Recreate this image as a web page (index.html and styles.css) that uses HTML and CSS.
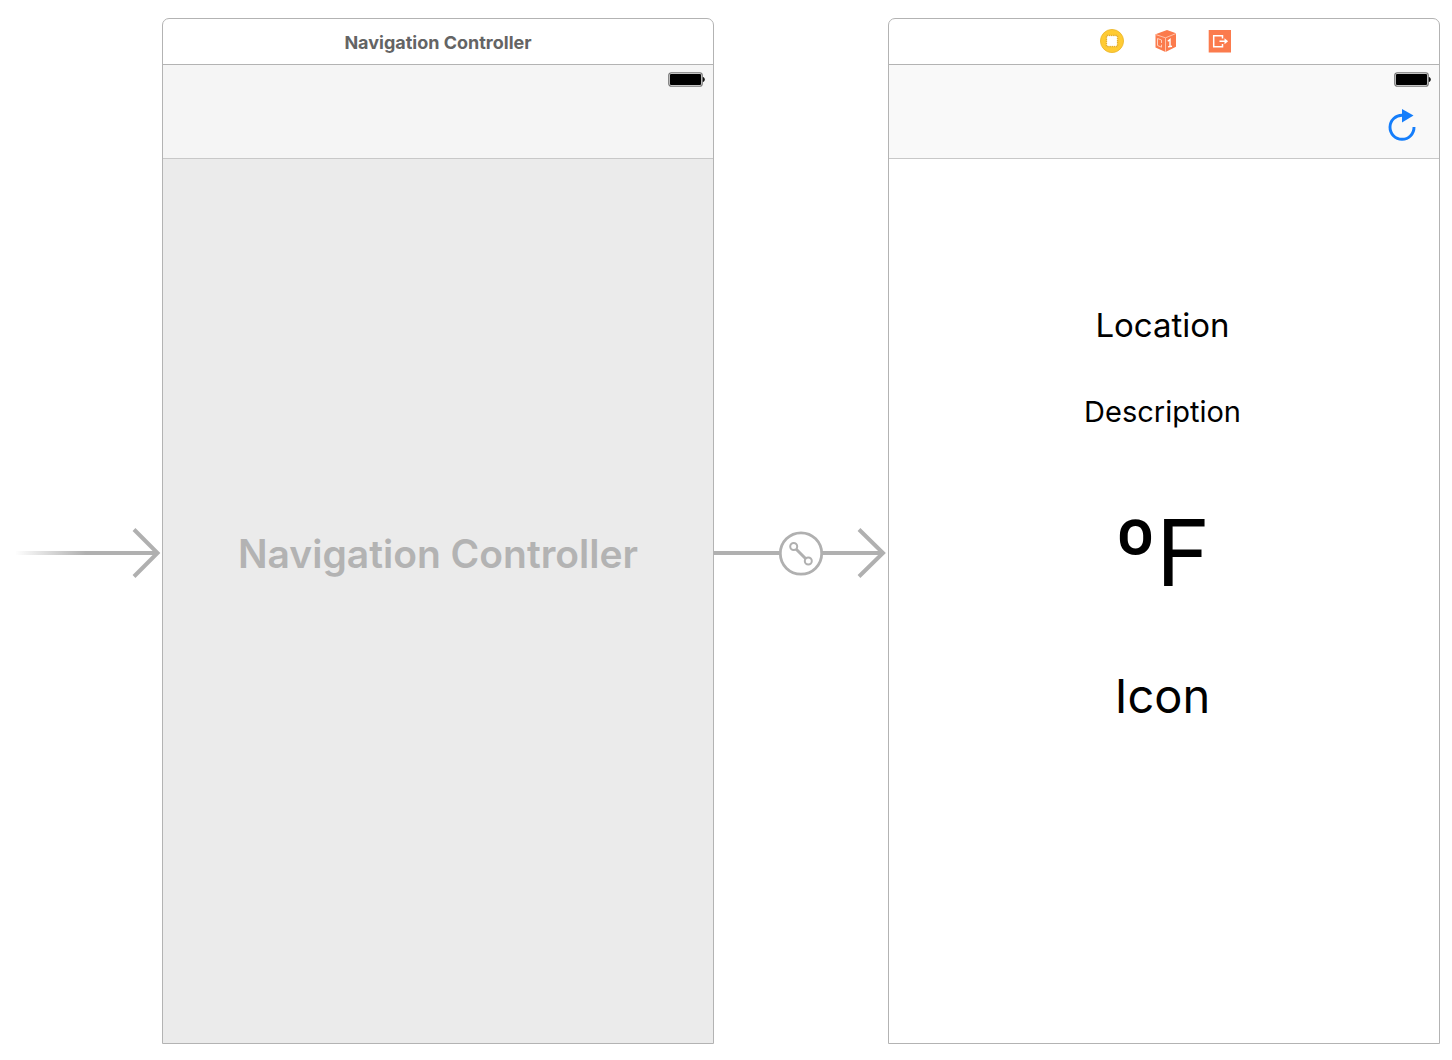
FILE: index.html
```html
<!DOCTYPE html>
<html lang="en">
<head>
<meta charset="utf-8">
<meta name="viewport" content="width=device-width, initial-scale=1">
<title>Storyboard</title>
<link rel="stylesheet" href="styles.css">
</head>
<body>
<main class="storyboard">
  <div class="connector">
    <svg width="162" height="52" viewBox="0 0 162 52" aria-hidden="true">
      <defs>
        <linearGradient id="fade" gradientUnits="userSpaceOnUse" x1="15" y1="0" x2="86" y2="0">
          <stop offset="0" stop-color="#b0b0b0" stop-opacity="0"/>
          <stop offset="1" stop-color="#b0b0b0"/>
        </linearGradient>
      </defs>
      <rect x="16" y="24" width="140" height="4" fill="url(#fade)"/>
      <path d="M134 2.500 157.500 26 134 49.500" fill="none" stroke="#b0b0b0" stroke-width="4"/>
    </svg>
  </div>

  <section class="scene">
    <header class="scene-bar"><h2 class="scene-title">Navigation Controller</h2></header>
    <div class="nav-bar nav-bar-dim">
      <svg class="battery" width="37" height="15" viewBox="0 0 37 15" role="img" aria-label="Battery">
        <rect x=".75" y=".75" width="33.500" height="13.500" rx="2.500" fill="#ddd" stroke="#777" stroke-width="1.200"/>
        <rect x="2" y="2" width="31" height="11" rx="1" fill="#000"/>
        <path d="M34.800 5c2.700.4 2.700 4.600 0 5z" fill="#111"/>
      </svg>
    </div>
    <div class="placeholder">Navigation Controller</div>
  </section>

  <div class="connector">
    <svg width="174" height="52" viewBox="0 0 174 52" aria-hidden="true">
      <g fill="none" stroke="#b0b0b0">
        <path d="M0 26H66M108 26H168M145 2.500 169 26 145 49.500" stroke-width="4"/>
        <circle cx="87" cy="26.500" r="20.700" stroke-width="2.800"/>
        <path d="M82 22 92 32" stroke-width="3"/>
        <circle cx="79.700" cy="19.500" r="3.500" stroke-width="2"/>
        <circle cx="94.300" cy="34" r="3.500" stroke-width="2"/>
      </g>
    </svg>
  </div>

  <section class="scene">
    <header class="scene-bar scene-icons">
      <svg width="24" height="24" viewBox="0 0 24 24" role="img" aria-label="View Controller">
        <circle cx="12" cy="12" r="11.500" fill="#ffcb33" stroke="#eebb35"/>
        <rect x="6.500" y="6.500" width="11" height="11" fill="#fff" stroke="#e5ae2b" stroke-width="1.500" stroke-dasharray="1.500 .7"/>
        <rect x="7.500" y="7.500" width="9" height="9" fill="#fff"/>
      </svg>
      <svg width="24" height="24" viewBox="0 0 24 24" role="img" aria-label="First Responder">
        <path d="M1.500 5.200 13 1l9 3.200v13.600L11.500 23l-10-4.500z" fill="#fb7b4d"/>
        <path d="M1.500 5.500 11.500 8.800 22 4.500M11.500 8.800V23" fill="none" stroke="#ffc2a9" stroke-width="1"/>
        <path d="M7.500 11 3.500 9.500v7l4 1.700v-2.500M7.500 11v3" fill="none" stroke="#ffd0bd" stroke-width="1"/>
        <path d="M13.800 12.200 16 10.500v7.200M14 17.900l4-.7" fill="none" stroke="#fff" stroke-width="1.400"/>
      </svg>
      <svg width="24" height="24" viewBox="0 0 24 24" role="img" aria-label="Exit">
        <rect x=".7" y="1" width="22.300" height="22.500" fill="#fb7b4d"/>
        <path d="M14.500 9.500V6.800H5.700v10.900h8.800V15M11.500 12.200h6" fill="none" stroke="#fff" stroke-width="1.500"/>
        <path d="m16.500 9.200 3.600 3-3.600 3z" fill="#fff"/>
      </svg>
    </header>
    <div class="nav-bar">
      <svg class="battery" width="37" height="15" viewBox="0 0 37 15" role="img" aria-label="Battery">
        <rect x=".75" y=".75" width="33.500" height="13.500" rx="2.500" fill="#ddd" stroke="#777" stroke-width="1.200"/>
        <rect x="2" y="2" width="31" height="11" rx="1" fill="#000"/>
        <path d="M34.800 5c2.700.4 2.700 4.600 0 5z" fill="#111"/>
      </svg>
      <button class="refresh" type="button" aria-label="Refresh">
        <svg width="28" height="34" viewBox="0 0 28 34" aria-hidden="true">
          <path d="M14.500 7.300A12 12 0 1 0 26 19" fill="none" stroke="#157efb" stroke-width="2.900"/>
          <path d="M14 1v13.500L25.500 7.500z" fill="#157efb"/>
        </svg>
      </button>
    </div>
    <div class="weather">
      <p class="location">Location</p>
      <p class="description">Description</p>
      <p class="temperature">ºF</p>
      <p class="icon-label">Icon</p>
    </div>
  </section>
</main>
</body>
</html>
```
FILE: styles.css
```css
* {
  box-sizing: border-box;
}

body {
  margin: 0;
  background: #fff;
  color: #000;
  font-family: Inter, "Liberation Sans", sans-serif;
}

svg {
  display: block;
}

h2,
p {
  margin: 0;
}

.storyboard {
  display: grid;
  grid-template-columns: 162px minmax(0, 1fr) 174px minmax(0, 1fr);
  min-height: 100vh;
  padding: 18px 12px 16px 0;
}

.connector {
  display: flex;
  align-items: center;
  padding-top: 44px;
}

.scene {
  display: flex;
  flex-direction: column;
  border: 1px solid #b3b3b3;
  border-radius: 7px 7px 0 0;
  overflow: hidden;
}

.scene-bar {
  display: flex;
  align-items: center;
  justify-content: center;
  height: 46px;
  padding-top: 2px;
  border-bottom: 1px solid #b3b3b3;
}

.scene-icons {
  gap: 30px;
  padding: 0 0 2px 3px;
}

.scene-title {
  font-size: 18px;
  line-height: 20px;
  font-weight: 700;
  color: #646464;
}

.nav-bar {
  display: flex;
  flex-direction: column;
  align-items: flex-end;
  gap: 21px;
  height: 94px;
  padding: 7px 8px 0 0;
  border-bottom: 1px solid #c8c8c8;
  background: #f9f9f9;
}

.nav-bar-dim {
  background: #f5f5f5;
}

.refresh {
  margin-right: 15px;
  padding: 0;
  border: 0;
  background: none;
}

.placeholder {
  display: flex;
  flex: 1;
  align-items: center;
  justify-content: center;
  padding-bottom: 94px;
  background: #ebebeb;
  color: #b3b3b3;
  font-size: 39px;
  line-height: 48px;
  font-weight: 600;
}

.weather {
  display: flex;
  flex: 1;
  flex-direction: column;
  align-items: center;
  padding: 146px 3px 0 0;
}

.location {
  font-size: 33px;
  line-height: 40px;
}

.description {
  margin-top: 47px;
  font-size: 29px;
  line-height: 40px;
}

.temperature {
  margin-top: 61px;
  font-size: 92px;
  line-height: 120px;
}

.icon-label {
  margin-top: 53px;
  font-size: 47px;
  line-height: 60px;
}
```
